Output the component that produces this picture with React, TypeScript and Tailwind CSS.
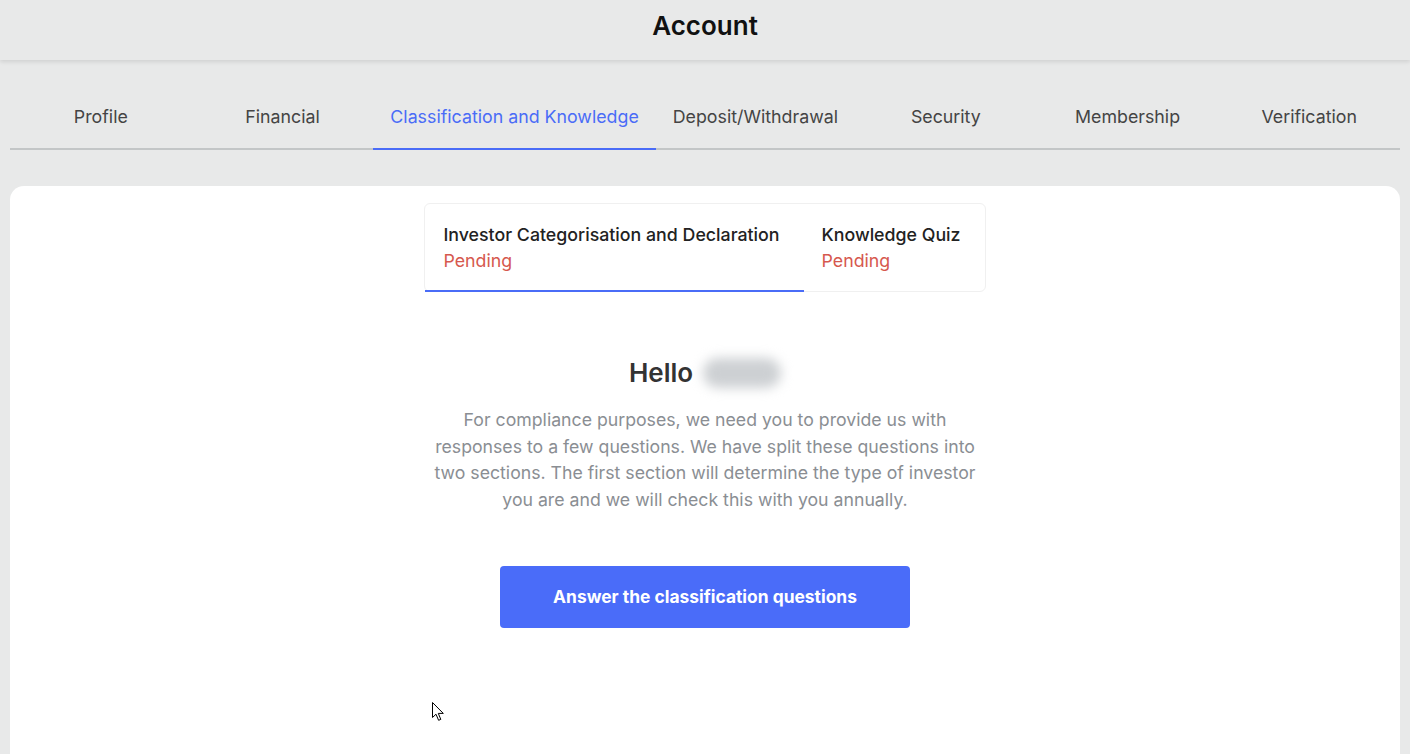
import { useState } from "react";

const tabs = [
    'Profile',
    'Financial',
    'Classification and Knowledge',
    'Deposit/Withdrawal',
    'Security',
    'Membership',
    'Verification'
];

const sections = [
    { name: 'Investor Categorisation and Declaration', status: 'Pending' },
    { name: 'Knowledge Quiz', status: 'Pending' }
];

// Account page
export default function App() {
    const [activeTab, setActiveTab] = useState('Classification and Knowledge');
    const [activeSection, setActiveSection] = useState(0);

    return (
        <div className="relative h-screen overflow-hidden bg-[#e8e9e9] flex flex-col font-['Inter','Noto_Sans',sans-serif]">
            {/* Header */}
            <header className="h-[60px] shrink-0 flex items-center justify-center shadow-[0_2px_4px_rgba(0,0,0,0.1)]">
                <h1 className="text-[26px] font-semibold text-[#111] leading-none -mt-[8px]">Account</h1>
            </header>

            {/* Top tabs */}
            <nav className="mx-[10px] mt-[26px] flex border-b-2 border-[#c3c6c7]">
                {tabs.map((tab) => (
                    <button
                        key={tab}
                        onClick={() => setActiveTab(tab)}
                        className={
                            'flex-1 min-w-fit px-[17px] h-[64px] -mb-[2px] whitespace-nowrap text-[17.8px] border-b-2 ' +
                            (activeTab === tab
                                ? 'text-[#4a6cf7] border-[#4a6cf7]'
                                : 'text-[#444] border-transparent')
                        }
                    >
                        {tab}
                    </button>
                ))}
            </nav>

            {/* Card */}
            <main className="mx-[10px] mt-[36px] flex-1 bg-white rounded-t-[14px] flex flex-col items-center pt-[17px]">
                <div className="flex border border-[#f0f0f0] rounded-[6px]">
                    {sections.map((s, i) => (
                        <button
                            key={s.name}
                            onClick={() => setActiveSection(i)}
                            className={
                                'text-left pl-[18px] pr-[24px] pt-[18px] pb-[16px] border-b-2 -mb-px ' +
                                (activeSection === i ? 'border-[#4a6cf7]' : 'border-transparent')
                            }
                        >
                            <div className="text-[17.8px] leading-[26px] font-medium text-[#222] whitespace-nowrap">{s.name}</div>
                            <div className="text-[17.8px] leading-[26px] text-[#d6584e]">{s.status}</div>
                        </button>
                    ))}
                </div>

                <h2 className="mt-[63px] flex items-center text-[26px] leading-[36px] font-semibold text-[#333]">
                    Hello
                    <span className="ml-[10px] inline-block w-[78px] h-[30px] rounded-full bg-[#cdd0d3] blur-[6px]" />
                </h2>

                <p className="mt-[16px] max-w-[550px] text-center text-[17.7px] leading-[26.7px] text-[#8a8e93]">
                    For compliance purposes, we need you to provide us with responses to a few questions. We have split these questions into two sections. The first section will determine the type of investor you are and we will check this with you annually.
                </p>

                <button className="mt-[52px] w-[410px] h-[62px] rounded-[4px] bg-[#4a6cf9] text-white text-[17.4px] font-bold">
                    Answer the classification questions
                </button>
            </main>

            {/* Mouse pointer */}
            <svg className="absolute left-[432px] top-[702px]" width="13" height="20" viewBox="0 0 13 20">
                <path d="M0.5 0.5 L0.5 15.5 L4 12.2 L6.6 18.3 L8.8 17.4 L6.3 11.4 L11.3 11.4 Z" fill="white" stroke="black" strokeWidth="1" strokeLinejoin="round" />
            </svg>
        </div>
    );
}
